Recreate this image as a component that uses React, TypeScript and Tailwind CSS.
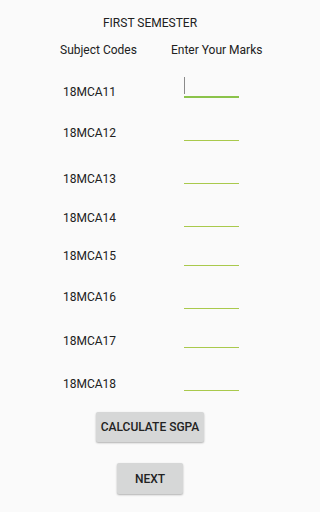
import React from "react";

type Row = { code: string; rowCls: string; lineCls: string; focused?: boolean };

const rows: Row[] = [
  { code: "18MCA11", rowCls: "flex h-[41px]", lineCls: "mt-[2px]", focused: true },
  { code: "18MCA12", rowCls: "flex h-[46px]", lineCls: "mt-[14px]" },
  { code: "18MCA13", rowCls: "flex h-[39px]", lineCls: "mt-[11px]" },
  { code: "18MCA14", rowCls: "flex h-[38px]", lineCls: "mt-[15px]" },
  { code: "18MCA15", rowCls: "flex h-[41px]", lineCls: "mt-[16px]" },
  { code: "18MCA16", rowCls: "flex h-[44px]", lineCls: "mt-[18px]" },
  { code: "18MCA17", rowCls: "flex h-[43px]", lineCls: "mt-[13px]" },
  { code: "18MCA18", rowCls: "flex h-[35px]", lineCls: "mt-[13px]" },
];

export default function App() {
  return (
    <div className="w-full min-h-screen bg-[#fafafa]">
      <div className="w-[300px] h-[512px] bg-[#fafafa] text-[#212121] text-[12px] leading-[14px] font-['Roboto',sans-serif] overflow-hidden">
        <div className="pt-[16px] text-center">FIRST SEMESTER</div>
        <div className="mt-[13px] flex">
          <div className="pl-[60px] w-[171px]">Subject Codes</div>
          <div>Enter Your Marks</div>
        </div>
        <div className="mt-[28px]">
          {rows.map((r) => (
            <div key={r.code} className={r.rowCls}>
              <div className="pl-[63px] w-[184px]">{r.code}</div>
              <div className="flex flex-col">
                {r.focused ? (
                  <>
                    <div className="-mt-[8px] h-[17px] w-px bg-[#8a8a8a]" />
                    <div className={r.lineCls + " h-[2px] w-[55px] bg-[#8bc34a]"} />
                  </>
                ) : (
                  <div className={r.lineCls + " h-px w-[55px] bg-[#a9c94c]"} />
                )}
              </div>
            </div>
          ))}
        </div>
        <div className="flex flex-col items-center">
          <div className="w-[108px] h-[30px] bg-[#d6d7d7] rounded-[2px] shadow-[0_1px_2px_rgba(0,0,0,0.3)] flex items-center justify-center font-medium text-[12px] text-[#222]">
            CALCULATE SGPA
          </div>
          <div className="mt-[21px] w-[66px] h-[31px] bg-[#d6d7d7] rounded-[2px] shadow-[0_1px_2px_rgba(0,0,0,0.3)] flex items-center justify-center font-medium text-[12px] text-[#222]">
            NEXT
          </div>
        </div>
      </div>
    </div>
  );
}
